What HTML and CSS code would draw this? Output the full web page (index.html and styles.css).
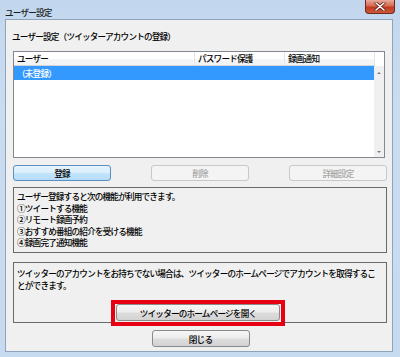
FILE: index.html
```html
<!DOCTYPE html>
<html lang="ja">
<head>
    <meta charset="UTF-8">
    <title>ユーザー設定</title>
    <link rel="stylesheet" href="styles.css">
</head>
<body>
    <div class="window">
        <div class="titlebar">
            <span class="title">ユーザー設定</span>
            <div class="close">
                <svg width="12" height="9" viewBox="0 0 12 9">
                    <path d="M2 1 L10 8 M10 1 L2 8" stroke="#5a2218" stroke-width="3" stroke-linecap="round"/>
                    <path d="M2 1 L10 8 M10 1 L2 8" stroke="#ffffff" stroke-width="1.6" stroke-linecap="round"/>
                </svg>
            </div>
        </div>
        <div class="client">
            <div class="caption">ユーザー設定（ツイッターアカウントの登録）</div>

            <div class="list">
                <div class="list-head">
                    <div class="col c-user">ユーザー</div>
                    <div class="col c-pass">パスワード保護</div>
                    <div class="col c-rec">録画通知</div>
                    <div class="col c-rest"></div>
                </div>
                <div class="list-body">
                    <div class="rows">
                        <div class="row selected">（未登録）</div>
                    </div>
                    <div class="scrollbar">
                        <span class="arrow up"></span>
                        <span class="arrow down"></span>
                    </div>
                </div>
            </div>

            <div class="actions">
                <button class="btn focused">登録</button>
                <button class="btn" disabled>削除</button>
                <button class="btn" disabled>詳細設定</button>
            </div>

            <div class="box info">
                <p>ユーザー登録すると次の機能が利用できます。</p>
                <p>①ツイートする機能</p>
                <p>②リモート録画予約</p>
                <p>③おすすめ番組の紹介を受ける機能</p>
                <p>④録画完了通知機能</p>
            </div>

            <div class="box notice">
                <p>ツイッターのアカウントをお持ちでない場合は、ツイッターのホームページでアカウントを取得することができます。</p>
                <div class="open-wrap">
                    <button class="btn open">ツイッターのホームページを開く</button>
                </div>
            </div>

            <div class="footer">
                <button class="btn">閉じる</button>
            </div>
        </div>
    </div>
</body>
</html>
```

FILE: styles.css
```css
*{
    box-sizing: border-box;
}

body{
    margin: 0;
    width: 400px;
    height: 357px;
    overflow: hidden;
    font-family: "Noto Sans CJK JP", "Noto Sans", sans-serif;
    font-size: 8.6px;
    font-weight: 500;
    letter-spacing: -0.8px;
    color: #000;
}

.window{
    width: 400px;
    height: 357px;
    display: flex;
    flex-direction: column;
    padding: 0 7px 5px 5px;
    background: linear-gradient(180deg, #c2d7ee 0%, #cadcf0 30%, #c6daf0 100%);
}

.titlebar{
    height: 19px;
    display: flex;
    justify-content: space-between;
    align-items: flex-start;
    margin-right: -2px;
}

.title{
    line-height: 12px;
    margin-top: 6px;
    color: #1e1e1e;
}

.close{
    width: 30px;
    height: 14px;
    display: flex;
    align-items: center;
    justify-content: center;
    background: linear-gradient(180deg, #e9a99b 0%, #d66a53 45%, #c0391f 55%, #d1583c 100%);
    border: 1px solid #6b2a1d;
    border-top: none;
    border-radius: 0 0 4px 4px;
}

.client{
    flex: 1;
    display: flex;
    flex-direction: column;
    background: #f0f0f0;
    border: 1px solid #8fa3bc;
    padding: 10px 5px 0 6px;
}

.caption{
    line-height: 13px;
    height: 13px;
    margin-bottom: 8px;
}

.list{
    height: 107px;
    margin-left: 1px;
    margin-right: 2px;
    border: 1px solid #828790;
    background: #fff;
    display: flex;
    flex-direction: column;
}

.list-head{
    height: 14px;
    display: flex;
    flex-shrink: 0;
}

.col{
    height: 14px;
    line-height: 13px;
    padding-left: 3px;
    background: linear-gradient(180deg, #ffffff 0%, #ffffff 50%, #f4f5f7 51%, #f2f3f5 100%);
    border-right: 1px solid #e2e5ea;
    border-bottom: 1px solid #d5d5d5;
}

.c-user{ width: 181px; }
.c-pass{ width: 90px; }
.c-rec{ width: 90px; }
.c-rest{
    flex: 1;
    background: #fff;
    border: none;
}

.list-body{
    flex: 1;
    display: flex;
}

.rows{
    flex: 1;
}

.row{
    height: 14px;
    line-height: 14px;
    padding-left: 3px;
}

.selected{
    background: #3399ff;
    color: #fff;
}

.scrollbar{
    width: 10px;
    background: #f0f0f0;
    display: flex;
    flex-direction: column;
    justify-content: space-between;
    align-items: center;
    padding: 6px 0 4px;
}

.arrow{
    width: 0;
    height: 0;
    border-left: 2px solid transparent;
    border-right: 2px solid transparent;
}

.up{ border-bottom: 2px solid #7a7a7a; }
.down{ border-top: 2px solid #7a7a7a; }

.actions{
    display: flex;
    justify-content: space-between;
    margin-top: 7px;
    margin-left: 1px;
}

.btn{
    width: 98px;
    height: 16px;
    padding: 0;
    font: inherit;
    letter-spacing: inherit;
    line-height: 14px;
    color: #000;
    border: 1px solid #8a8a8a;
    border-radius: 3px;
    background: linear-gradient(180deg, #f6f6f6 0%, #ececec 48%, #dddddd 52%, #d2d2d2 100%);
}

.btn:disabled{
    color: #a6a6a6;
    border-color: #c6c8ca;
    background: #f4f4f4;
}

.focused{
    border-color: #5b8fc0;
    background: linear-gradient(180deg, #e6f4fd 0%, #d9eefc 48%, #c3e4fa 52%, #b4dcf8 100%);
}

.box{
    margin-left: 1px;
    border: 1px solid #6a6a6a;
    background: #f0f0f0;
    padding: 3px 3px 0 3px;
}

.box p{
    margin: 0;
}

.info{
    height: 66px;
    margin-top: 6px;
    line-height: 11.6px;
}

.notice{
    height: 61px;
    margin-top: 9px;
    padding: 4px 7px 0 3px;
    line-height: 12px;
    display: flex;
    flex-direction: column;
}

.open-wrap{
    position: relative;
    width: 164px;
    margin: auto auto 1px;
}

.open-wrap::after{
    content: "";
    position: absolute;
    left: -5px;
    right: -5px;
    top: -4px;
    bottom: -5px;
    border: 4px solid #e60012;
}

.open{
    width: 164px;
    height: 17px;
    display: block;
}

.footer{
    display: flex;
    justify-content: center;
    margin-top: 7px;
    margin-right: -2px;
}

.footer .btn{
    height: 17px;
}
```
